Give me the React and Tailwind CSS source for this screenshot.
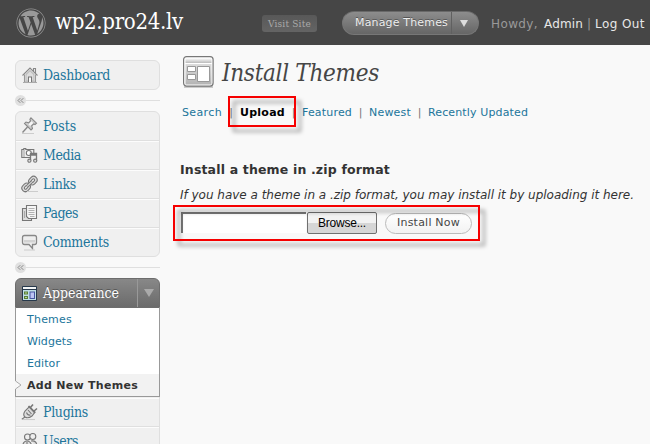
import { useLayoutEffect, useRef } from "react";
import { FaWordpress } from "react-icons/fa";

const sans = "font-['DejaVu_Sans',sans-serif]";
const serif = "font-['DejaVu_Serif_Condensed','DejaVu_Serif',serif] [font-stretch:condensed]";

// Text tracked so that its line has the given width.
function Fit({ w, className = "", children }) {
  const ref = useRef(null);
  useLayoutEffect(() => {
    const el = ref.current;
    el.style.letterSpacing = "0px";
    const natural = el.getBoundingClientRect().width;
    el.style.letterSpacing = `${(w - natural) / el.textContent.length}px`;
  }, [w]);
  return (
    <span ref={ref} className={`inline-block shrink-0 whitespace-nowrap ${className}`}>
      {children}
    </span>
  );
}

const svgProps = { width: 18, height: 18, viewBox: "0 0 18 18", fill: "none", stroke: "#777", strokeWidth: 1.1, className: "shrink-0" };

const icons = {
  home: (
    <svg {...svgProps}>
      <path d="M1.500 9.500 9 2l7.500 7.500M12.500 5V2.500h2V7" stroke="#888" />
      <path d="M3.500 8.500v7.500h11V8.500" stroke="#999" />
      <path d="M5 8.500 9 4.500l4 4V15H5z" fill="#ddd" stroke="#bbb" />
      <path d="M7.500 16v-5h3v5" fill="#fff" />
      <path d="M2 16.500h14" stroke="#aaa" />
    </svg>
  ),
  pin: (
    <svg {...svgProps}>
      <path d="M6.500 10 1.500 15.500" stroke="#888" strokeWidth="1.400" />
      <path d="M10 .8 15.500 6.200l-1.500 1.300-1.300-.5-2 1.800.8 2.700-1.500 1.500-6.500-6.500L5 5l2.700.8 1.800-2-.6-1.500z" fill="#ccc" stroke="#888" />
      <path d="m10.500 4.200 1.700 1.700-3 3-1.700-1.700z" fill="#f6f6f6" stroke="none" />
      <path d="M1 16.500h12" stroke="#ccc" />
    </svg>
  ),
  media: (
    <svg {...svgProps}>
      <path d="M.8 3.500h2v-1h2v1h8v8H.8z" fill="#eee" />
      <path d="M3 4v7" stroke="#aaa" />
      <circle cx="7.800" cy="7" r="2.500" fill="#fff" />
      <path d="M9.500 14.500v-7h6v7M9.500 9h6" fill="#eee" strokeWidth="1.300" />
      <circle cx="8.400" cy="14.700" r="1.600" fill="#ddd" />
      <circle cx="14.200" cy="14.700" r="1.600" fill="#ddd" />
    </svg>
  ),
  link: (
    <svg {...svgProps}>
      <g transform="rotate(-45 8.500 9)">
        <rect x="-.8" y="5.500" width="9" height="7" rx="3.500" fill="#ddd" />
        <rect x="8.800" y="5.500" width="9" height="7" rx="3.500" fill="#ddd" />
        <rect x="1.700" y="7.800" width="4" height="2.400" rx="1.200" fill="#f0f0f0" />
        <rect x="11.300" y="7.800" width="4" height="2.400" rx="1.200" fill="#f0f0f0" />
        <path d="M5 9h7" stroke="#777" strokeWidth="3" />
        <path d="M5 9h7" stroke="#ddd" />
      </g>
      <path d="M6 16.500h11" stroke="#ccc" />
    </svg>
  ),
  pages: (
    <svg {...svgProps}>
      <path d="M1.500 4.500h9v12h-9z" fill="#ddd" />
      <path d="M5.500 1.500h10v13h-8l-2-2z" fill="#f6f6f6" />
      <path d="M7.500 4.500h6M7.500 6.500h6M7.500 8.500h6M7.500 10.500h6M9 12.500h4.500" stroke="#aaa" strokeWidth=".9" />
      <path d="M3.500 7v7" stroke="#aaa" />
    </svg>
  ),
  comment: (
    <svg {...svgProps}>
      <path d="M3.500 2.500h10q2 0 2 2v5q0 2-2 2h-2v4l-3.500-4H3.500q-2 0-2-2v-5q0-2 2-2z" fill="#eee" stroke="#888" strokeWidth="1.300" />
      <path d="M3 7h11v2.500H3z" fill="#d2d2d2" stroke="none" />
      <path d="M3 17h11" stroke="#ccc" />
    </svg>
  ),
  appearance: (
    <svg {...svgProps} stroke="none">
      <rect x="1" y="2" width="15" height="15" rx="1" fill="#26384b" />
      <path d="M2 3h13v2H2z" fill="#f4f6f6" />
      <path d="M2 6h13v10H2z" fill="#bfe0e6" />
      <path d="M3 7.500h4v3H3zM3 12h4v3H3z" fill="#587f38" />
      <path d="M4 8.500h2v1H4zM4 13h2v1H4z" fill="#b9dc8a" />
      <path d="M8.500 7.500H14V15H8.500z" fill="#4656a0" />
      <path d="M9.500 8.500H13V14H9.500z" fill="#bcc5f4" />
    </svg>
  ),
  plug: (
    <svg {...svgProps}>
      <path d="M4 8q-2.500 4 0 6 3 2 7-1l3-4-5.500-5.500z" fill="#ddd" />
      <path d="m7.500 3 6.500 7M9 5l3-3.500M12.500 8.500l3.500-3" strokeWidth="1.600" />
      <path d="M5.500 9.500q1 3 4 2.500M4 14 .8 16.200M7 7l3.500 4" />
      <path d="M2 16.500h12" stroke="#ccc" />
    </svg>
  ),
  users: (
    <svg {...svgProps}>
      <circle cx="6.500" cy="5" r="3" fill="#eee" />
      <circle cx="11.800" cy="4.500" r="3" fill="#eee" />
      <path d="M1.500 16q0-7 4.500-7t5 7M10 9q6-1 6 6" fill="#ddd" />
      <path d="M6 10v4" />
    </svg>
  ),
};

function MenuRow({ icon, label, w, first }) {
  return (
    <div className={`flex h-[29px] items-center border-b border-[#dfdfdf] pl-[5px] ${first ? "" : "border-t border-t-[#fcfcfc] pb-[2px]"}`}>
      {icons[icon]}
      <Fit w={w} className={`ml-1 text-[14px] leading-[18px] text-[#21759b] ${serif}`}>{label}</Fit>
    </div>
  );
}

function Separator() {
  return (
    <div className="flex h-[11px] items-center">
      <svg width="11" height="11" viewBox="0 0 11 11" fill="none">
        <circle cx="5.500" cy="5.500" r="5.500" fill="#e0e0e0" />
        <path d="M5.300 3.200 3 5.500l2.300 2.300M8.300 3.200 6 5.500l2.300 2.300" stroke="#888" />
      </svg>
      <div className="h-px flex-1 bg-[#dfdfdf]" />
    </div>
  );
}

function Header() {
  return (
    <header className="flex h-[45px] items-center bg-[#464646]">
      <FaWordpress className="ml-4 size-[30px] shrink-0 text-[#999]" />
      <div className="-mt-[2px] ml-[9px] w-[207px]">
        <Fit w={128} className={`text-[22px] leading-[30px] text-white ${serif}`}>wp2.pro24.lv</Fit>
      </div>
      <div className="mt-[2px] flex h-[17px] w-[55px] shrink-0 items-center justify-center rounded-[3px] bg-linear-to-b from-[#585858] to-[#646464]">
        <Fit w={43} className={`text-[10px] leading-3 text-[#aaa] ${serif}`}>Visit Site</Fit>
      </div>
      <div className="ml-[25px] flex h-6 w-[137px] shrink-0 items-center rounded-full border border-[#777] border-t-[#696969] bg-linear-to-b from-[#8d8d8d] to-[#666] pl-3">
        <Fit w={93} className={`text-[11px] leading-4 text-[#eee] [text-shadow:0_-1px_0_#555] ${sans}`}>Manage Themes</Fit>
        <div className="ml-[3px] h-[22px] w-px bg-[#606060]" />
        <svg className="ml-[7px]" width="10" height="8" viewBox="0 0 10 8">
          <path d="M1 1h8L5 8z" fill="#ddd" />
        </svg>
      </div>
      <div className={`ml-3 mt-[2px] flex items-center text-[12px] leading-4 ${sans}`}>
        <Fit w={47} className="text-[#999]">Howdy,</Fit>
        <Fit w={39} className="ml-[6px] text-[#e8e8e8]">Admin</Fit>
        <span className="w-3 shrink-0 text-center text-[#999]">|</span>
        <Fit w={50} className="text-[#e8e8e8]">Log Out</Fit>
      </div>
    </header>
  );
}

function Sidebar() {
  return (
    <nav className="w-[145px] shrink-0">
      <div className="mt-[15px] h-[30px] overflow-hidden rounded-md border border-[#dfdfdf] bg-[#f0f0f0]">
        <MenuRow icon="home" label="Dashboard" w={67} first />
      </div>
      <div className="py-[5px]"><Separator /></div>
      <div className="h-[146px] overflow-hidden rounded-md border border-[#dfdfdf] bg-[#f0f0f0]">
        <MenuRow icon="pin" label="Posts" w={33} first />
        <MenuRow icon="media" label="Media" w={38} />
        <MenuRow icon="link" label="Links" w={33} />
        <MenuRow icon="pages" label="Pages" w={35} />
        <MenuRow icon="comment" label="Comments" w={66} />
      </div>
      <div className="py-[5px]"><Separator /></div>
      <div className="flex h-[30px] items-center rounded-t-md border border-[#6d6d6d] bg-linear-to-b from-[#888] to-[#6b6b6b] pl-[5px]">
        {icons.appearance}
        <Fit w={76} className={`ml-1 text-[14px] leading-[18px] text-white [text-shadow:0_-1px_0_#555] ${serif}`}>Appearance</Fit>
        <div className="ml-[18px] h-7 w-px shrink-0 bg-[#999]" />
        <svg className="ml-[5px] shrink-0" width="12" height="10" viewBox="0 0 12 10">
          <path d="M1 1h10L6 9z" fill="#aaa" />
        </svg>
      </div>
      <div className={`h-[89px] border border-t-0 border-[#999] bg-white text-[11px] leading-6 text-[#21759b] ${sans}`}>
        <div className="h-[22px] pl-[11px]"><Fit w={45}>Themes</Fit></div>
        <div className="h-[22px] pl-[11px]"><Fit w={45}>Widgets</Fit></div>
        <div className="h-[22px] pl-[11px]"><Fit w={33}>Editor</Fit></div>
        <div className="-ml-px flex h-[22px] bg-[#f2f2f2] text-[#333]">
          <svg className="shrink-0" width="12" height="22" viewBox="0 0 12 22" fill="none">
            <path d="M.5 0v7M.5 15v7" stroke="#999" />
            <path d="M.5 7 6 11 .5 15" stroke="#aaa" fill="#f9f9f9" />
          </svg>
          <Fit w={111} className="font-bold">Add New Themes</Fit>
        </div>
      </div>
      <div className="border-x border-[#dfdfdf] bg-[#f0f0f0] pt-px">
        <MenuRow icon="plug" label="Plugins" w={45} />
        <MenuRow icon="users" label="Users" w={35} />
      </div>
    </nav>
  );
}

function Highlight({ className }) {
  return <div className={`absolute border-2 border-[#f60000] drop-shadow-[5px_5px_2px_rgba(0,0,0,0.4)] ${className}`} />;
}

function Pipe({ className }) {
  return <span className={`shrink-0 text-center text-[#777] ${className}`}>|</span>;
}

export default function App() {
  return (
    <div className="h-[444px] w-[650px] overflow-hidden bg-[#f9f9f9]">
      <Header />
      <div className="flex pl-[15px]">
        <Sidebar />
        <main className={`ml-5 flex-1 ${sans}`}>
          <div className="flex h-[45px] pt-[10px]">
            <svg className="ml-[3px] shrink-0" width="31" height="34" viewBox="0 0 31 34">
              <defs>
                <linearGradient id="bar" x2="0" y2="1"><stop stopColor="#fff" /><stop offset="1" stopColor="#bbb" /></linearGradient>
                <linearGradient id="body" x2="0" y2="1"><stop stopColor="#dcdcdc" /><stop offset="1" stopColor="#b4b4b4" /></linearGradient>
              </defs>
              <path d="M1 32h29" stroke="#bbb" strokeWidth="1.500" />
              <rect x=".6" y="1.600" width="29.500" height="29.500" rx="3" fill="#fff" stroke="#777" strokeWidth="1.200" />
              <path d="M2.500 3h26v5h-26z" fill="url(#bar)" />
              <path d="M2.500 9h26v20.500h-26z" fill="url(#body)" />
              <path d="M4.500 11.500h8v5h-8zM4.500 19.500h8v5h-8zM14.500 11.500h12v15h-12z" fill="#fff" stroke="#999" />
            </svg>
            <Fit w={157} className={`ml-2 mt-px text-[24px] italic leading-[34px] text-[#464646] ${serif}`}>Install Themes</Fit>
          </div>
          <div className="relative mt-[15px] flex h-4 text-[11px] leading-4 text-[#21759b]">
            <Fit w={40} className="ml-[2px]">Search</Fit>
            <Pipe className="w-[18px]" />
            <Fit w={45} className="font-bold text-black">Upload</Fit>
            <Pipe className="w-[17px]" />
            <Fit w={50}>Featured</Fit>
            <Pipe className="w-[17px]" />
            <Fit w={42}>Newest</Fit>
            <Pipe className="w-[17px]" />
            <Fit w={100}>Recently Updated</Fit>
            <Highlight className="-top-[9px] left-[48px] h-[31px] w-[68px]" />
          </div>
          <h2 className="mt-[41px] h-4 text-[12.5px] font-bold leading-4 text-[#333]"><Fit w={210}>Install a theme in .zip format</Fit></h2>
          <p className="mt-[9px] h-4 text-[12px] italic leading-4 text-[#333]"><Fit w={454}>If you have a theme in a .zip format, you may install it by uploading it here.</Fit></p>
          <div className="relative mt-[10px] flex h-[22px]">
            <div className="-mt-px ml-px h-[21px] w-[125px] border-l-2 border-t-2 border-[#777] bg-white" />
            <button className="-mt-px ml-px flex h-[22px] w-[70px] items-center justify-center rounded-[2px] border border-[#707070] bg-linear-to-b from-[#f2f2f2] from-50% to-[#d6d6d6] to-50% font-['Liberation_Sans',sans-serif] text-[12px] text-black">
              <Fit w={48}>Browse...</Fit>
            </button>
            <button className="ml-2 flex h-[21px] w-[87px] items-center justify-center rounded-full border border-[#bbb] bg-linear-to-b from-white to-[#f2f2f2] text-[11px] text-[#464646]">
              <Fit w={63}>Install Now</Fit>
            </button>
            <Highlight className="-left-[7px] -top-[8px] h-[36px] w-[307px]" />
          </div>
        </main>
      </div>
    </div>
  );
}
